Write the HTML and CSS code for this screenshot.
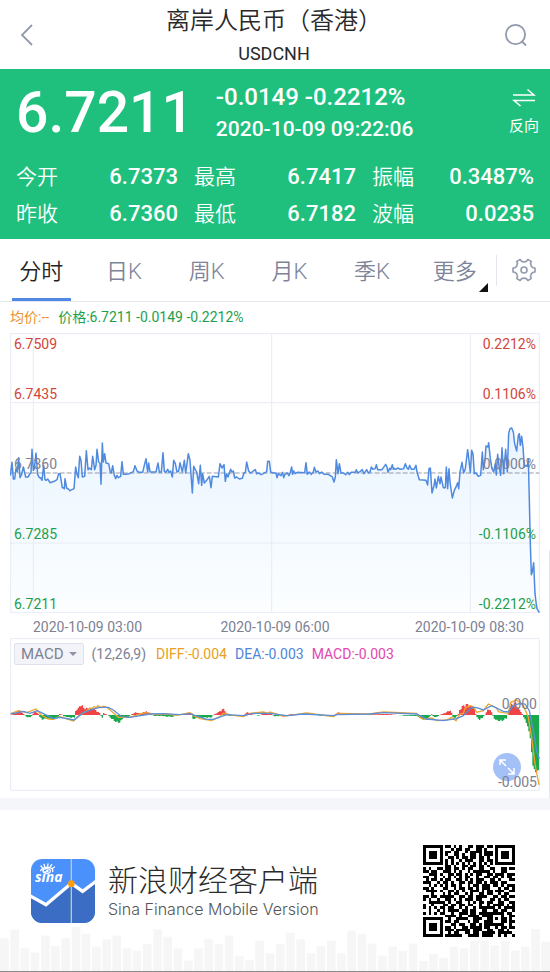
FILE: index.html
```html
<!DOCTYPE html>
<html lang="zh-CN">
<head>
<meta charset="utf-8">
<meta name="viewport" content="width=device-width, initial-scale=1">
<title>离岸人民币（香港） USDCNH</title>
<link rel="stylesheet" href="styles.css">
</head>
<body>
<header class="topbar">
  <button class="icon-btn" type="button" aria-label="返回">
    <svg width="14" height="24" viewBox="0 0 14 24"><path d="M12 2 2 12l10 10" fill="none" stroke="#9299ad" stroke-width="1.8"/></svg>
  </button>
  <div class="heading">
    <h1>离岸人民币（香港）</h1>
    <p>USDCNH</p>
  </div>
  <button class="icon-btn" type="button" aria-label="搜索">
    <svg width="24" height="24" viewBox="0 0 24 24"><g fill="none" stroke="#9299ad" stroke-width="1.8"><circle cx="11.500" cy="11.500" r="9.600"/><path d="m17.500 18 4.500 4.500"/></g></svg>
  </button>
</header>

<section class="quote">
  <div class="quote-main">
    <strong class="price">6.7211</strong>
    <div class="change">
      <p class="delta">-0.0149 -0.2212%</p>
      <p class="time">2020-10-09 09:22:06</p>
    </div>
    <button class="reverse" type="button">
      <svg width="24" height="20" viewBox="0 0 24 20"><path d="M1 7h21L15.500 1.500M23 12.500H2l6.500 5.500" fill="none" stroke="#fff" stroke-width="1.6"/></svg>
      <span>反向</span>
    </button>
  </div>
  <dl class="stats">
    <div><dt>今开</dt><dd>6.7373</dd></div>
    <div><dt>最高</dt><dd>6.7417</dd></div>
    <div><dt>振幅</dt><dd>0.3487%</dd></div>
    <div><dt>昨收</dt><dd>6.7360</dd></div>
    <div><dt>最低</dt><dd>6.7182</dd></div>
    <div><dt>波幅</dt><dd>0.0235</dd></div>
  </dl>
</section>

<nav class="tabs">
  <div class="tab-list">
    <button class="tab active" type="button">分时</button>
    <button class="tab" type="button">日K</button>
    <button class="tab" type="button">周K</button>
    <button class="tab" type="button">月K</button>
    <button class="tab" type="button">季K</button>
    <button class="tab more" type="button">更多</button>
  </div>
  <button class="settings" type="button" aria-label="设置">
    <svg width="24" height="24" viewBox="0 0 24 24"><g fill="none" stroke="#9299ad" stroke-width="1.6" stroke-linejoin="round"><path d="M8.200 1.500 9.500 3.200Q12 4.600 14.500 3.200L15.800 1.500 19.200 3.400 18.500 5.600Q18.800 8.600 21.200 9.700L23 10V14L21.200 14.300Q18.800 15.400 18.500 18.400L19.200 20.600 15.800 22.500 14.500 20.800Q12 19.400 9.500 20.800L8.200 22.500 4.800 20.600 5.500 18.400Q5.200 15.400 2.800 14.300L1 14V10L2.800 9.700Q5.200 8.600 5.500 5.600L4.800 3.400Z"/><circle cx="12" cy="12" r="3"/></g></svg>
  </button>
</nav>

<main class="charts">
  <p class="legend"><span class="avg">均价:--</span><span class="down">价格:6.7211 -0.0149 -0.2212%</span></p>

  <div class="chart">
    <svg class="plot" viewBox="30 -202 1590 841" role="img" aria-label="分时走势">
      <defs>
        <linearGradient id="fade" gradientUnits="userSpaceOnUse" x1="0" y1="100" x2="0" y2="640">
          <stop offset="0" stop-color="#e9f3ff"/><stop offset=".25" stop-color="#eff7ff"/><stop offset="1" stop-color="#fcfeff"/>
        </linearGradient>
      </defs>
      <path id="price-area" fill="url(#fade)"/>
      <path d="M32-200H1618V637H32ZM32 7H1618M32 428H1618M100-200V637M815-200V637M1411-200V637" fill="none" stroke="#e8ebf4" stroke-width="3"/>
      <path d="M32 218H1618" stroke="#999ca6" stroke-width="3" stroke-dasharray="15 6"/>
      <path id="price-line" fill="none" stroke="#4f8ae0" stroke-width="4.500" stroke-linejoin="round"/>
    </svg>
    <div class="scale">
      <div class="up"><span>6.7509</span><span>6.7435</span></div>
      <div><span>6.7360</span></div>
      <div class="down"><span>6.7285</span></div>
      <div class="down"><span>6.7211</span></div>
    </div>
    <div class="scale right">
      <div class="up"><span>0.2212%</span><span>0.1106%</span></div>
      <div><span>0.0000%</span></div>
      <div class="down"><span>-0.1106%</span></div>
      <div class="down"><span>-0.2212%</span></div>
    </div>
  </div>

  <div class="dates"><span>2020-10-09 03:00</span><span>2020-10-09 06:00</span><span>2020-10-09 08:30</span></div>

  <div class="chart">
    <svg class="plot" viewBox="30 142 1590 459" role="img" aria-label="MACD">
      <path d="M32 144H1618V599H32Z" fill="none" stroke="#e8ebf4" stroke-width="3"/>
      <path id="bars-up" fill="#ee4447"/>
      <path id="bars-down" fill="#1aa84c"/>
      <path id="diff-line" fill="none" stroke="#eea52d" stroke-width="4"/>
      <path id="dea-line" fill="none" stroke="#5a8fdb" stroke-width="4"/>
    </svg>
    <div class="indicator">
      <button class="picker" type="button">MACD</button>
      <span class="args">(12,26,9)</span>
      <span class="diff">DIFF:-0.004</span>
      <span class="dea">DEA:-0.003</span>
      <span class="macd">MACD:-0.003</span>
    </div>
    <button class="expand" type="button" aria-label="全屏">
      <svg width="28" height="28" viewBox="0 0 28 28"><path d="M7 12V7h6M7 7l6 6M15 15l6 6M21 15v6h-6" fill="none" stroke="#fff" stroke-width="1.500"/></svg>
    </button>
    <span class="mark zero">0.000</span>
    <span class="mark low">-0.005</span>
  </div>
  <div class="scroll-thumb"></div>
</main>

<footer class="promo">
  <svg class="skyline" id="skyline" viewBox="0 250 1650 140" aria-hidden="true"></svg>
  <svg class="logo" width="64" height="64" viewBox="0 0 192 192" aria-hidden="true">
    <defs><clipPath id="tile"><rect width="192" height="192" rx="34"/></clipPath></defs>
    <g clip-path="url(#tile)">
      <rect width="192" height="192" fill="#4b91fb"/>
      <path d="M0 112 45 137 121 73 155 97 192 68V192H0Z" fill="#3a6dc3"/>
      <path d="M121 0V192" stroke="#c5c6b4" stroke-width="4"/>
      <path d="M-4 110 45 137 121 73 155 97 196 66" fill="none" stroke="#fff" stroke-width="10"/>
      <circle cx="121" cy="74" r="10" fill="#ff9c0a"/>
      <g fill="none" stroke="#fff" stroke-width="4" stroke-linecap="round">
        <path d="M29 35Q38 23 53 25 68 28 65 38"/><ellipse cx="47" cy="36" rx="11" ry="7"/>
        <path d="M34 26 30 21M41 22 39 16M50 21 51 15M58 23 62 17M65 28 70 24"/>
      </g>
      <circle cx="49" cy="36" r="4" fill="#fff"/>
      <text class="wordmark" x="12" y="68">sina</text>
    </g>
  </svg>
  <div class="brand">
    <h2>新浪财经客户端</h2>
    <p>Sina Finance Mobile Version</p>
  </div>
  <svg class="qr" width="92" height="92" viewBox="0 0 33 33" role="img" aria-label="二维码" shape-rendering="crispEdges"><path id="qr-path"/></svg>
</footer>
<script src="charts.js"></script>
</body>
</html>
```

FILE: styles.css
```css
* { box-sizing: border-box; }
body {
  margin: 0;
  background: #fff;
  color: #7d8192;
  font-family: Roboto, "Noto Sans CJK SC", sans-serif;
  font-size: 14px;
  line-height: 18px;
}
h1, h2, p, dl, dd { margin: 0; font-weight: 400; }
button { margin: 0; padding: 0; border: 0; background: none; color: inherit; font: inherit; }
svg { display: block; }

.topbar { display: flex; align-items: center; justify-content: space-between; height: 69px; padding: 0 22px 0 20px; }
.icon-btn { display: flex; width: 24px; }
.icon-btn:last-child { justify-content: flex-end; }
.heading { padding-top: 3px; color: #28282a; text-align: center; }
.heading h1 { font-size: 24px; line-height: 36px; font-weight: 350; }
.heading p { font-size: 18px; line-height: 30px; }

.quote { background: #1fc07d; color: #fff; padding: 12px 16px 7px; font-weight: 500; }
.quote-main { display: flex; align-items: center; height: 64px; }
.price { font-size: 57px; line-height: 64px; font-weight: 500; }
.change { margin-left: 22px; flex: 1; white-space: nowrap; }
.delta { font-size: 24px; line-height: 32px; font-weight: 500; }
.time { font-size: 21px; line-height: 32px; font-weight: 500; }
.reverse { display: flex; flex-direction: column; align-items: center; gap: 8px; margin-right: -5px; padding-bottom: 2px; font-size: 15px; line-height: 20px; font-weight: 400; }
.stats { display: grid; grid-template-columns: repeat(3, 1fr); column-gap: 16px; padding-top: 13px; }
.stats div { display: flex; align-items: center; justify-content: space-between; height: 37px; }
.stats dt { font-size: 21px; font-weight: 350; }
.stats dd { font-size: 22px; font-weight: 500; }

.tabs { display: flex; align-items: center; height: 63px; border-bottom: 1px solid #e4e6ee; }
.tab-list { display: flex; flex: 1; height: 100%; }
.tab { position: relative; flex: 1; padding-top: 3px; font-size: 22px; color: #7d8499; font-weight: 350; }
.tab.active { color: #222; }
.tab.active::after { content: ""; position: absolute; left: 12px; right: 12px; bottom: 0; height: 3px; background: #5088e6; }
.tab.more::after { content: ""; position: absolute; right: 8px; bottom: 9px; border: solid transparent; border-width: 9px 0 0 9px; border-bottom: 9px solid #111; border-top: 0; }
.settings { display: flex; align-items: center; justify-content: center; width: 54px; height: 31px; border-left: 1px solid #e4e6ee; }

.charts { position: relative; padding: 0 10px 7px; }
.legend { display: flex; gap: 9px; height: 31px; line-height: 31px; }
.avg { color: #e8912e; }
.up { color: #d2453b; }
.down { color: #1e9f4c; }
.chart { position: relative; }
.plot { width: 100%; height: auto; }
.scale { position: absolute; inset: 0 4px; display: grid; grid-template-rows: repeat(4, 1fr); }
.scale div { display: flex; flex-direction: column; justify-content: flex-end; }
.scale div:first-child { justify-content: space-between; padding-top: 2px; }
.scale.right { text-align: right; }
.dates { display: grid; grid-template-columns: 1fr auto 1fr; height: 25px; padding: 0 16px; line-height: 28px; }
.dates span:first-child { padding-left: 7px; }
.dates span:last-child { text-align: right; }
.indicator { position: absolute; top: 4px; left: 4px; display: flex; align-items: center; height: 24px; gap: 8px; white-space: nowrap; }
.picker { display: flex; align-items: center; gap: 5px; height: 22px; padding: 0 6px; border: 1px solid #dfe2ec; border-radius: 2px; background: #f3f4f9; font-size: 15px; }
.picker::after { content: ""; border: 4px solid transparent; border-top-color: #8d92a4; border-bottom: 0; }
.args { margin-right: 2px; }
.diff { color: #e8a023; }
.dea { color: #4f86d6; }
.macd { color: #e248ae; }
.expand { position: absolute; right: 19px; bottom: 10px; border-radius: 50%; background: #a3c1f6; }
.mark { position: absolute; right: 3px; }
.zero { top: 57px; }
.low { bottom: 0; }
.scroll-thumb { position: absolute; right: 0; top: 248px; bottom: 0; width: 1px; background: #e6e7ef; }

.promo { position: relative; display: flex; align-items: center; height: 174px; padding: 0 35px 0 31px; border-top: 12px solid #f5f6fa; border-bottom: 1px solid #888; }
.skyline { position: absolute; left: 0; bottom: 0; width: 100%; fill: #f6f6f6; }
.logo, .brand, .qr { position: relative; }
.brand { flex: 1; margin-left: 13px; white-space: nowrap; }
.brand h2 { color: #2b2b2b; font-size: 30px; line-height: 36px; font-weight: 300; }
.brand p { color: #555; font-family: Inter, sans-serif; font-size: 16px; line-height: 20px; font-weight: 300; }
.wordmark { fill: #fff; font: italic 700 42px "Open Sans", sans-serif; }
```

FILE: charts.js
```javascript
// Series are drawn in plot units; each part starts at its own x offset.
const parse = (parts) => parts.flatMap(([dx, text]) =>
  text.trim().split(/[;\s]+/).map((p) => {
    const [x, y] = p.split(",").map(Number);
    return [x + dx, y];
  }));
const toPath = (pts) => "M" + pts.map((p) => p.join(" ")).join("L");
const setPath = (id, d) => document.getElementById(id).setAttribute("d", d);

const price = parse([
  [0, `31,226 36,186 40,236 44,236 48,205 52,215 56,172 60,232 65,222 70,200 77,230 84,230 90,220 93,218 96,147 100,210 103,205 108,158 113,222 118,232 122,232 126,240 131,195 135,238 138,240 143,236 150,247 165,242 171,238 176,220 180,220 187,262 190,262 193,265 195,235 200,263 205,266 210,271 222,265 227,200 231,222 235,232 239,168 243,180 247,230 254,228 259,151 264,208 268,203 274,208 278,168 284,208 288,195 291,147 296,185 300,188 303,252 307,128 310,185 314,160 318,188 326,190 331,215 334,218 338,196 343,225 347,235 351,225 355,232 362,228 366,184 370,222 376,222 388,220 400,214 405,196 411,212 417,216 428,216 433,195 438,175 443,215 446,188 450,215 468,215 474,188 478,215 484,215 489,157 493,213 497,216 503,207 507,216 512,212 517,230 521,180 526,190 531,215 536,212`],
  [540, `0,187 7,215 13,180 17,218 21,190 25,160 30,180 37,278 41,198 46,208 50,215 56,250 61,195 65,255 68,220 73,248 80,240 88,228 93,262 97,228 115,230 120,190 126,203 132,193 136,243 140,220 144,230 152,207 156,215 160,212 164,233 170,230 178,236 187,234 192,218 196,216 200,185 206,212 212,218 220,212 226,208 230,220 236,218 243,223 250,220 260,214 263,183 268,183 272,215 280,218 288,218 291,232 295,220 303,226 308,216 311,232 315,222 322,218 327,226 331,215 335,200 338,222 341,212 346,220 352,216 374,217 378,187 382,222 388,215 394,222 400,215 403,201 408,215 414,212 418,220 425,215 432,222 445,222 457,230 462,245 466,230 469,178 474,220 478,190 483,218 490,218 497,223 503,216 508,223 513,216 526,216 529,208 533,218 540,214 547,208 552,220 560,208 565,218`],
  [1110, `0,215 4,200 9,207 16,204 19,193 23,208 36,208 47,192 51,200 54,216 59,204 62,208 67,193 70,207 73,204 77,207 85,203 90,207 101,205 106,190 111,203 115,207 119,195 124,207 132,207 138,195 141,215 148,238 168,240 173,254 177,205 181,203 186,278 192,256 195,236 199,263 205,228 210,250 213,230 220,262 226,262 229,200 233,265 237,205 240,245 247,293 253,270 257,262 263,247 266,265 270,215 276,186 281,218 286,205 293,148 298,190 301,217 305,150 309,160 313,220 318,218 325,228 332,225 337,155 340,208 345,180 348,137 354,140 356,127 361,175 366,205 371,215 376,190 379,224 383,162 388,205 392,225 396,142 401,220 407,147 412,215 416,100 420,85 425,83 430,95 434,130 440,152 445,105 448,100 451,135 455,108 459,140 463,200 468,195 472,198 475,175 478,300 481,430 484,523 487,515 491,487 495,580 498,605 501,625 508,637`]
]);
setPath("price-line", toPath(price));
setPath("price-area", toPath(price) + "L31 637Z");

setPath("dea-line", toPath(parse([
  [0, `32,370 70,362 90,368 112,360 135,371 160,384 180,380 222,388 250,366 275,356 300,350 325,350 340,358 365,378 390,380 450,370 490,369 540,372 570,369 620,386 640,386 680,372 730,375 760,368 800,368`],
  [810, `0,368 50,375 100,370 190,375 200,372 300,370 340,366 440,370 470,385 520,390 560,384 580,375 605,350 620,351 640,358 665,345 700,362 715,364 730,345 750,338 765,340 778,360 790,420 800,480 808,505`]
])));
setPath("diff-line", toPath(parse([
  [0, `32,369 55,360 80,366 108,355 125,374 145,385 160,386 180,378 220,391 240,372 258,362 270,352 277,354 282,348 290,351 293,345 304,351 310,347 320,350 340,366 355,380 390,380 420,370 440,366 470,372 500,370 530,374 570,366 585,377 600,384 635,390 660,378 670,368 700,374 730,378 750,368 790,364 805,368`],
  [810, `0,364 40,377 110,367 190,378 205,368 300,370 340,364 440,368 450,380 460,386 485,382 500,390 530,388 545,380 558,390 570,370 580,368 585,353 600,345 610,348 620,365 640,360 655,340 680,352 685,363 700,366 715,368 722,335 740,328 760,345 775,380 785,440 795,520 807,583`]
])));

const histogram = parse([
  [0, `32,1 45,5 55,14 66,6 72,0 76,-5 85,-8 92,-6 96,4 104,12 112,6 116,-4 125,-14 140,-12 155,-14 172,-8 176,3 184,2 188,-4 205,-8 222,-8 226,18 230,20 236,24 242,34 250,20 258,22 264,18 275,22 290,12 300,3 302,-8 306,-8 309,6 318,2 324,-3 335,-14 350,-24 360,-22 368,-8 385,-6 392,2 405,8 420,4 436,12 445,6 455,0 460,-3 480,-3 500,-5 518,-6 522,0 545,2 565,8 574,6 577,-14 590,-8 610,-8 632,-8 638,0 645,4 655,10 670,20 678,4 684,-2 730,0 738,8 745,8 755,2 775,-2 790,6 805,3`],
  [810, `0,6 10,-4 40,-3 60,2 110,4 150,-2 190,-5 200,8 212,6 220,0 300,2 350,3 400,-2 440,-3 450,-12 470,-16 478,-4 482,4 488,-6 500,-6 506,0 514,3 528,8 534,14 542,12 546,-8 556,-8 562,0 568,18 576,28 590,34 600,28 612,22 616,-4 628,-16 636,-8 646,6 654,22 664,6 670,-10 680,-18 695,-18 708,-10 716,20 724,36 736,38 744,20 752,10 760,-10 770,-30 778,-60 782,-100 786,-150 795,-172 808,-160`]
]);
const zero = 373;
let up = "", down = "";
for (let x = 33, i = 0, n = 0; x < 1616; x += 4, n++) {
  while (histogram[i + 1] && histogram[i + 1][0] < x) i++;
  const [x0, h0] = histogram[i], [x1, h1] = histogram[i + 1] || histogram[i];
  const base = x1 === x0 ? h0 : h0 + (h1 - h0) * (x - x0) / (x1 - x0);
  const h = Math.round(base * (n % 3 === 1 && base > -30 ? 0.8 : 1));
  if (h > 0) up += `M${x} ${zero}v${-h}h4v${h}z`;
  if (h < 0) down += `M${x} ${zero}v${-h}h4v${h}z`;
}
setPath("bars-up", up);
setPath("bars-down", down);

const tops = [290,264,320,333,282,313,290,255,276,315,293,282,320,327,307,263,285,320,357,320,293,307,282,342,355,297,335,307,273,293,335,313,297,335,267,278,306,342,315,327,306,358,337,348,315,320,297,297,311,297,327,315,262,300];
document.getElementById("skyline").innerHTML = tops
  .map((y, i) => `<rect x="${Math.round(i * 30.65)}" y="${y}" width="26" height="${388 - y}"/>`).join("");

const code = [
  "#######.##.#.#..##.###.##.#######",
  "#.....#...#.##.##..##.#...#.....#",
  "#.###.#.##.##..#.####.###.#.###.#",
  "#.###.#.#..##.#..##.#.###.#.###.#",
  "#.###.#..##.#.##.##.##.#..#.###.#",
  "#.....#.#.#..#.###..##.##.#.....#",
  "#######.#.#.#.#.#.#.#.#.#.#######",
  "........##.#..##.##.##.#.........",
  "#.#..##.##.##.#.##..##..##..##.##",
  "##.##..###.#.#..#.######.#..##...",
  "..###.#..##.##.#.#.##..##.###.###",
  "##..#..#.#.#.#.##..#..##.##.#.##.",
  ".#.##.#.##..##.#.#.###..##.#...##",
  "###..#.##.#..##.##.##.#.###.##...",
  "..#.#.#.#.##.#..#.##.###.##.#.###",
  "##.#...##..#.##.##.#.###...#.##.#",
  ".####.#..##.#.#..###.#.##.###..##",
  "...#...#.#.##..#.#..##.##..#.##..",
  "##.##.#####..##.##.####..##.##.##",
  "#.#..#..##.#.#.###.##...##.#.##..",
  "..######.#..##..#.#.##.##..##..##",
  "#..#...##.##.##.##..#..#.####.#.#",
  "#.#.#.##.##..#.#..#.######.#.####",
  "..#..#.#.####.##.##..##..##.##..#",
  "#.#.#.##..#..###.##.#########.##.",
  "........####.#..####.####...#..##",
  "#######..#..####..###..##.#.##.#.",
  "#.....#.##.##...#.##..###...##.##",
  "#.###.#...##.##..##.#.#######..#.",
  "#.###.#.##.#..##.####.##..#.##.##",
  "#.###.#.###.#####.###..##..##.#..",
  "#.....#..#.##..##.##.#####.#####.",
  "#######.######..####.####..#.#..#"
];
setPath("qr-path", code.flatMap((row, y) => [...row].map((c, x) => c === "#" ? `M${x} ${y}h1v1h-1z` : "")).join(""));
```
